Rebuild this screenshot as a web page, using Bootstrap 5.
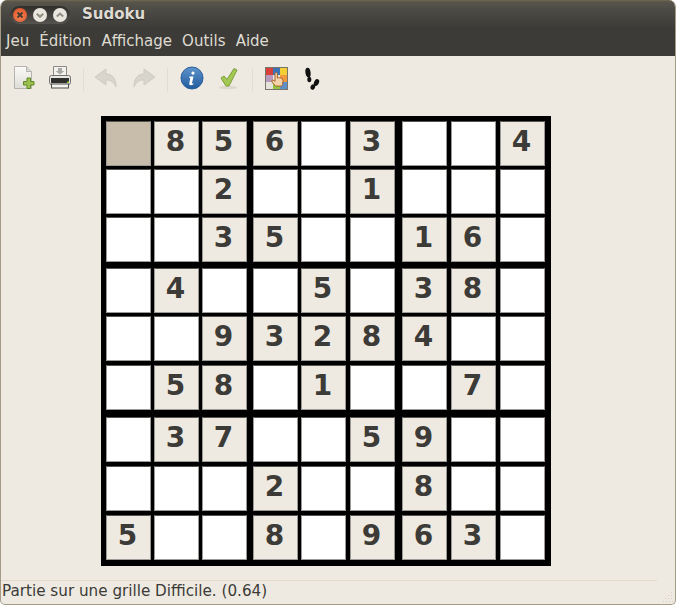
<!DOCTYPE html>
<html lang="fr">
<head>
    <meta charset="UTF-8">
    <meta name="viewport" content="width=device-width, initial-scale=1.0">
    <title>Sudoku</title>
    <link href="https://cdn.jsdelivr.net/npm/bootstrap@5.3.0/dist/css/bootstrap.min.css" rel="stylesheet">
    <style>
        html, body { background: #fff; height: 605px; overflow: hidden; }
        body { font-family: "DejaVu Sans", sans-serif; font-size: 13.33px; color: #3c3b37; }
        .app-window {
            height: 605px;
            background: #eeeae2;
            border: 1px solid #a59c88;
            border-top: 0;
            border-radius: 7px 7px 5px 5px;
            overflow: hidden;
        }
        .title-bar {
            height: 28px;
            padding-left: 9px;
            background: linear-gradient(#6f6853 0, #57544a 2px, #4c4b46 10px, #3c3b37 28px);
        }
        .win-buttons {
            width: 60px;
            height: 18px;
            margin-top: 1px;
            padding: 0 2px;
            background: linear-gradient(#2f2e2b, #55544f);
            border-radius: 9px;
        }
        .title-text { margin-left: 12px; margin-top: 1px; color: #dfdbd2; font-size: 15px; font-weight: 700; text-shadow: 0 1px 1px #222; }
        .menu-bar { height: 28px; padding-left: 5px; gap: 10.200px; background: #3c3b37; color: #dfdbd2; font-size: 15px; line-height: 27px; }
        .tool-bar { height: 44px; padding-left: 10px; }
        .tool-icon { display: block; flex: none; margin-top: 10px; }
        .tool-sep { width: 1px; height: 24px; margin-top: 12px; background: #e2ddd2; flex: none; }
        .board-area { padding: 16px 0 0 100px; }
        .board-grid {
            display: grid;
            width: 450px;
            height: 450px;
            padding: 5px 0 0 5px;
            background: #000;
            grid-template-columns: 48px 48px 51px 48px 49px 52px 49px 49px 45px;
            grid-template-rows: 48px 48px 51px 48px 49px 52px 49px 49px 45px;
        }
        .board-cell {
            width: 45px;
            height: 45px;
            padding-right: 2px;
            background: #fff;
            border: 1px solid #9b9a97;
            border-top-color: #55544f;
            color: #3c3b37;
            font-size: 28px;
            font-weight: 700;
            line-height: 40px;
            text-align: center;
        }
        .board-cell.given { background: #eeeae2; }
        .board-cell.picked { background: #c8bcaa; }
        .status-bar { height: 24px; margin-right: 18px; padding-left: 1px; border-top: 1px solid #e2dacb; line-height: 21px; font-size: 15.2px; white-space: nowrap; }
        .resize-grip { position: absolute; right: 1px; bottom: 1px; }
        .gap-new { margin-right: 13px; }
        .gap-sep-a { margin: 12px 10px 0 11px; }
        .gap-redo { margin-left: 14px; }
        .gap-sep-b { margin-left: 11px; }
        .gap-info { margin-left: 12px; }
        .gap-check { margin-left: 11px; }
        .gap-sep-c { margin-left: 13px; }
        .gap-hint { margin-left: 12px; margin-top: 11px; }
        .gap-feet { margin-left: 16px; }
    </style>
</head>
<body>
    <div class="app-window d-flex flex-column position-relative">
        <div class="title-bar d-flex align-items-center flex-shrink-0">
            <div class="win-buttons d-flex align-items-center gap-1">
                <svg width="16" height="16" viewBox="0 0 16 16"><defs><radialGradient id="cl" cx=".5" cy=".6" r=".6"><stop offset="0" stop-color="#f58a5a"/><stop offset="1" stop-color="#e0562a"/></radialGradient></defs><circle cx="8" cy="8" r="7" fill="url(#cl)"/><path d="M5.500 5.500l5 5M10.500 5.500l-5 5" stroke="#4a3a30" stroke-width="2"/></svg>
                <svg width="16" height="16" viewBox="0 0 16 16"><circle cx="8" cy="8" r="7" fill="#e9e6de"/><path d="M4.800 6.800L8 9.800l3.200-3" fill="none" stroke="#8f8c84" stroke-width="2"/></svg>
                <svg width="16" height="16" viewBox="0 0 16 16"><circle cx="8" cy="8" r="7" fill="#e9e6de"/><path d="M4.800 9.600L8 6.600l3.200 3" fill="none" stroke="#8f8c84" stroke-width="2"/></svg>
            </div>
            <div class="title-text">Sudoku</div>
        </div>

        <div class="menu-bar d-flex flex-shrink-0">
            <span>Jeu</span><span>Édition</span><span>Affichage</span><span>Outils</span><span>Aide</span>
        </div>

        <div class="tool-bar d-flex flex-shrink-0">
            <!-- nouveau -->
            <svg class="tool-icon gap-new" width="24" height="24" viewBox="0 0 24 24"><defs><linearGradient id="pg" x1="0" y1="0" x2="0" y2="1"><stop offset="0" stop-color="#fbfaf8"/><stop offset="1" stop-color="#dedcd6"/></linearGradient></defs><path d="M3.500.5h12l5 5v17h-17z" fill="url(#pg)" stroke="#b5b3ad"/><path d="M15.500.5v5h5" fill="#dcdad4" stroke="#b5b3ad"/><path d="M16 12h3.500v3.500H23V19h-3.500v3.500H16V19h-3.500v-3.500H16z" fill="#9cc04e" stroke="#5f8a25"/></svg>
            <!-- imprimer -->
            <svg class="tool-icon" width="24" height="24" viewBox="0 0 24 24"><path d="M5.500 .5h13v9h-13z" fill="#f2f1ee" stroke="#8b8a86"/><path d="M10 2h4v3h2.500L12 8.500 7.500 5H10z" fill="#a9a8a4"/><rect x="1.500" y="9.500" width="21" height="9" rx="2" fill="#e7e6e2" stroke="#72716d"/><rect x="3" y="12" width="18" height="5" fill="#2e2e2c"/><rect x="3.500" y="18" width="17" height="4" fill="#f5f4f1" stroke="#4e4d49"/><rect x="19" y="15.500" width="2" height="1.500" fill="#8cc63f"/></svg>
            <div class="tool-sep gap-sep-a"></div>
            <!-- annuler -->
            <svg class="tool-icon" width="24" height="24" viewBox="0 0 24 24"><path d="M1 11L12 3v5c6 0 10 4 10 13-2-5-5-7-10-7v5z" fill="#d8d5cd" stroke="#cfcbc3"/></svg>
            <!-- refaire -->
            <svg class="tool-icon gap-redo" width="24" height="24" viewBox="0 0 24 24"><path d="M23 11L12 3v5C6 8 2 12 2 21c2-5 5-7 10-7v5z" fill="#d8d5cd" stroke="#cfcbc3"/></svg>
            <div class="tool-sep gap-sep-b"></div>
            <!-- info -->
            <svg class="tool-icon gap-info" width="24" height="24" viewBox="0 0 24 24"><defs><linearGradient id="inf" x1="0" y1="0" x2="0" y2="1"><stop offset="0" stop-color="#5f93cb"/><stop offset="1" stop-color="#1f5c9e"/></linearGradient></defs><circle cx="12" cy="12" r="11" fill="url(#inf)" stroke="#2a5f98"/><path d="M13 5.500a1.600 1.600 0 1 1-.01 0zM9.500 10.500h4L12 17c-.1.600.500.600 1.500.200l-.2 1.300c-2.500 1.200-4.500.800-4-1.300l1-5.200H9.300z" fill="#fff"/></svg>
            <!-- vérifier -->
            <svg class="tool-icon gap-check" width="24" height="24" viewBox="0 0 24 24"><ellipse cx="13" cy="21.500" rx="9" ry="1.800" fill="#dcd8cf"/><path d="M6 12l3-2 3 3.500L19 2.500l3 1.500-8 16h-3z" fill="#a3c853" stroke="#7d9c38"/></svg>
            <div class="tool-sep gap-sep-c"></div>
            <!-- indices -->
            <svg class="tool-icon gap-hint" width="23" height="23" viewBox="0 0 23 23"><rect x=".5" y=".5" width="22" height="22" fill="#fff" stroke="#77746c"/><rect x="1" y="1" width="7" height="7" fill="#d9403c"/><rect x="8" y="1" width="7" height="7" fill="#3d72b3"/><rect x="15" y="1" width="7" height="7" fill="#f2cf35"/><rect x="1" y="8" width="7" height="7" fill="#b79abc"/><rect x="8" y="8" width="7" height="7" fill="#e8e4dc"/><rect x="15" y="8" width="7" height="7" fill="#ef9a3c"/><rect x="1" y="15" width="7" height="7" fill="#e6e3dc"/><rect x="8" y="15" width="7" height="7" fill="#8dc63f"/><rect x="15" y="15" width="7" height="7" fill="#5d8fc8"/><path d="M10 7c0-2 2.400-2 2.400 0v4l1.800-.3 1.600.3 1.500.6.700 2-.5 4-.8 1.500H10.500L7 15c-1-1.500.5-2.500 2-1.500l1 .8z" fill="#f4d3a8" stroke="#a9632a"/></svg>
            <!-- empreintes -->
            <svg class="tool-icon gap-feet" width="24" height="24" viewBox="0 0 24 24"><ellipse cx="4" cy="6.500" rx="2.600" ry="4.800" transform="rotate(-8 4 6.500)" fill="#111"/><ellipse cx="5.300" cy="13.500" rx="2" ry="2.800" fill="#111"/><ellipse cx="12.500" cy="16.500" rx="2.400" ry="3.600" transform="rotate(25 12.500 16.500)" fill="#111"/><ellipse cx="8.800" cy="21" rx="2.200" ry="2.800" transform="rotate(25 8.800 21)" fill="#111"/></svg>
        </div>

        <div class="board-area flex-grow-1">
            <div class="board-grid" id="board"></div>
        </div>

        <div class="status-bar flex-shrink-0">Partie sur une grille Difficile. (0.64)</div>

        <svg class="resize-grip" width="12" height="12" viewBox="0 0 12 12" fill="#d5cfc2"><rect x="9" y="1" width="1" height="1"/><rect x="6" y="4" width="1" height="1"/><rect x="9" y="4" width="1" height="1"/><rect x="3" y="7" width="1" height="1"/><rect x="6" y="7" width="1" height="1"/><rect x="9" y="7" width="1" height="1"/><rect x="1" y="10" width="1" height="1"/><rect x="4" y="10" width="1" height="1"/><rect x="7" y="10" width="1" height="1"/><rect x="10" y="10" width="1" height="1"/></svg>
    </div>

    <script>
        const puzzle = [
            "*856 3  4",
            "  2  1   ",
            "  35  16 ",
            " 4  5 38 ",
            "  93284  ",
            " 58 1  7 ",
            " 37  59  ",
            "   2  8  ",
            "5  8 963 "
        ];
        const board = document.getElementById("board");
        puzzle.join("").split("").forEach(function(c) {
            const cell = document.createElement("div");
            cell.className = "board-cell";
            if (c === "*") cell.classList.add("picked");
            else if (c !== " ") { cell.classList.add("given"); cell.textContent = c; }
            board.appendChild(cell);
        });
    </script>
    <script src="https://cdn.jsdelivr.net/npm/bootstrap@5.3.0/dist/js/bootstrap.bundle.min.js"></script>
</body>
</html>
